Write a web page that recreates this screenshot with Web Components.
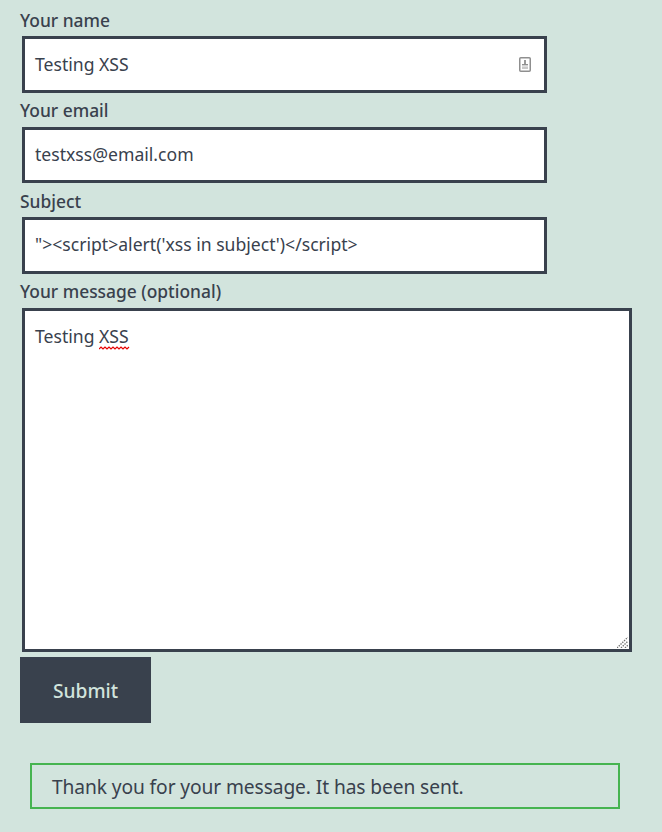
<!DOCTYPE html>
<html lang="en">
<head>
<meta charset="utf-8">
<title>Contact form</title>
<style>
  html, body { margin: 0; background: #d2e4dd; }
  body { font-family: "Noto Sans", "Open Sans", sans-serif; color: #39414d; }
</style>
</head>
<body>
<contact-form>
  <form-field label="Your name" value="Testing XSS" autofill></form-field>
  <form-field label="Your email" value="testxss@email.com" style="--label-height: 27px"></form-field>
  <form-field label="Subject" value="&quot;&gt;&lt;script&gt;alert('xss in subject')&lt;/script&gt;"></form-field>
  <form-area label="Your message (optional)" before="Testing " flagged="XSS"></form-area>
  <submit-button>Submit</submit-button>
  <form-notice>Thank you for your message. It has been sent.</form-notice>
</contact-form>

<script>
  class ContactForm extends HTMLElement {
    constructor() {
      super();
      this.attachShadow({ mode: 'open' });
      this.shadowRoot.innerHTML = `
        <style>
          :host {
            display: flex;
            flex-direction: column;
            align-items: flex-start;
            padding: 6px 0 0 20px;
            width: 642px;
            height: 826px;
            overflow: hidden;
          }
        </style>
        <slot></slot>
      `;
    }
  }

  class FormField extends HTMLElement {
    constructor() {
      super();
      this.attachShadow({ mode: 'open' });
    }

    connectedCallback() {
      const icon = this.hasAttribute('autofill') ? `
        <svg width="12" height="15" viewBox="0 0 12 15" aria-hidden="true">
          <rect x="0.75" y="0.75" width="10.5" height="13.5" rx="1" fill="#fff" stroke="#8f8f8f" stroke-width="1.5"/>
          <rect x="5" y="3" width="2" height="4" fill="#9a9a9a"/>
          <rect x="3" y="7" width="6" height="1.4" fill="#8f8f8f"/>
          <rect x="3" y="9.4" width="6" height="2.6" fill="#c9c9c9"/>
        </svg>` : '';
      this.shadowRoot.innerHTML = `
        <style>
          :host { display: block; }
          :host([autofill]) .box { padding-bottom: 0; }
          .label {
            font-size: 17.4px;
            font-weight: 500;
            line-height: var(--label-height, 28px);
            height: 30px;
          }
          .box {
            box-sizing: border-box;
            display: flex;
            align-items: center;
            justify-content: space-between;
            width: 525px;
            height: 56.5px;
            margin: 0 0 4px 2px;
            padding: 0 13px 2px 10px;
            background: #fff;
            border: 3px solid #39414d;
            font-size: 17.6px;
            white-space: nowrap;
          }
          svg { display: block; }
        </style>
        <div class="label"></div>
        <div class="box"><span class="value"></span>${icon}</div>
      `;
      this.shadowRoot.querySelector('.label').textContent = this.getAttribute('label');
      this.shadowRoot.querySelector('.value').textContent = this.getAttribute('value');
    }
  }

  class FormArea extends HTMLElement {
    constructor() {
      super();
      this.attachShadow({ mode: 'open' });
    }

    connectedCallback() {
      this.shadowRoot.innerHTML = `
        <style>
          :host { display: block; }
          .label {
            font-size: 17.4px;
            font-weight: 500;
            line-height: 27px;
            height: 30px;
          }
          .box {
            position: relative;
            box-sizing: border-box;
            width: 610px;
            height: 344px;
            margin: 0 0 5px 2px;
            padding: 12px 10px;
            background: #fff;
            border: 3px solid #39414d;
            font-size: 17.6px;
            line-height: 26px;
            white-space: pre;
          }
          .flagged { position: relative; display: inline-block; }
          .flagged svg { position: absolute; left: 0; bottom: -1px; }
          .grip { position: absolute; right: 1px; bottom: 1px; display: block; }
        </style>
        <div class="label"></div>
        <div class="box"><span class="before"></span><span class="flagged"><span class="word"></span><svg width="31" height="4" viewBox="0 0 31 4" aria-hidden="true"><path d="M0 3 L2 1 L4 3 L6 1 L8 3 L10 1 L12 3 L14 1 L16 3 L18 1 L20 3 L22 1 L24 3 L26 1 L28 3 L30 1" fill="none" stroke="#e60000" stroke-width="1.2"/></svg></span><svg class="grip" width="11" height="11" viewBox="0 0 11 11" aria-hidden="true"><path d="M0 11 L11 0 M4 11 L11 4 M8 11 L11 8" stroke="#6e6e6e" stroke-width="1.3" stroke-dasharray="1.4 1.1" fill="none"/></svg></div>
      `;
      this.shadowRoot.querySelector('.label').textContent = this.getAttribute('label');
      this.shadowRoot.querySelector('.before').textContent = this.getAttribute('before');
      this.shadowRoot.querySelector('.word').textContent = this.getAttribute('flagged');
    }
  }

  class SubmitButton extends HTMLElement {
    constructor() {
      super();
      this.attachShadow({ mode: 'open' });
      this.shadowRoot.innerHTML = `
        <style>
          :host {
            box-sizing: border-box;
            display: flex;
            align-items: center;
            justify-content: center;
            width: 131px;
            height: 66px;
            padding-top: 2px;
            background: #39414d;
            color: #d2e4dd;
            font-size: 19.2px;
            font-weight: 500;
          }
        </style>
        <slot></slot>
      `;
    }
  }

  class FormNotice extends HTMLElement {
    constructor() {
      super();
      this.attachShadow({ mode: 'open' });
      this.shadowRoot.innerHTML = `
        <style>
          :host {
            display: flex;
            align-items: center;
            box-sizing: border-box;
            width: 590px;
            height: 46px;
            margin: 40px 0 0 10px;
            padding: 2px 20px 0;
            border: 2px solid #46b450;
            font-size: 19.2px;
            white-space: nowrap;
            letter-spacing: -0.1px;
          }
        </style>
        <slot></slot>
      `;
    }
  }

  customElements.define('contact-form', ContactForm);
  customElements.define('form-field', FormField);
  customElements.define('form-area', FormArea);
  customElements.define('submit-button', SubmitButton);
  customElements.define('form-notice', FormNotice);
</script>
</body>
</html>
